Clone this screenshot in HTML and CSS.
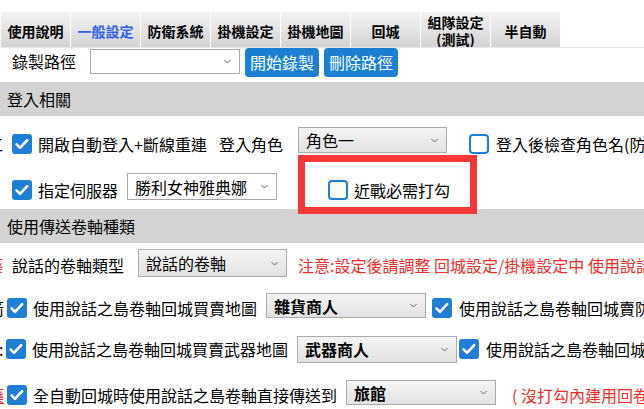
FILE: index.html
```html
<!DOCTYPE html>
<html lang="zh-Hant">
<head>
<meta charset="utf-8">
<title>一般設定</title>
<link rel="stylesheet" href="styles.css">
</head>
<body>
<div class="page">
  <nav class="tabs">
    <div class="tab">使用說明</div>
    <div class="tab active">一般設定</div>
    <div class="tab">防衛系統</div>
    <div class="tab">掛機設定</div>
    <div class="tab">掛機地圖</div>
    <div class="tab">回城</div>
    <div class="tab two">組隊設定<br>(測試)</div>
    <div class="tab">半自動</div>
  </nav>

  <div class="rec-row">
    <span class="rec-label">錄製路徑</span>
    <div class="select plain sel-path"><span></span><svg class="chev" width="7" height="5" viewBox="0 0 7 5"><path d="M0.5 1l3 3 3-3" fill="none" stroke="#666" stroke-width="1"/></svg></div>
    <button class="btn">開始錄製</button>
    <button class="btn">刪除路徑</button>
  </div>

  <div class="section-header">登入相關</div>

  <div class="row r1">
    <span class="cut cut-a">工</span>
    <svg class="cb cb-r1" width="20" height="20" viewBox="0 0 20 20"><rect width="20" height="20" rx="3" fill="#1f7ed6"/><path d="M4.6 10.4l3.4 3.4 7.2-7.6" fill="none" stroke="#fff" stroke-width="2.6" stroke-linecap="round" stroke-linejoin="round"/></svg>
    <span class="lbl w-r1">開啟自動登入+斷線重連<span class="sp12"></span>登入角色</span>
    <div class="select sel-role"><span>角色一</span><svg class="chev" width="7" height="5" viewBox="0 0 7 5"><path d="M0.5 1l3 3 3-3" fill="none" stroke="#666" stroke-width="1"/></svg></div>
    <svg class="cb cb-check-name" width="20" height="20" viewBox="0 0 20 20"><rect x="1" y="1" width="18" height="18" rx="3" fill="#fff" stroke="#1f7ed6" stroke-width="2"/></svg>
    <span class="lbl ml7">登入後檢查角色名(防止登錯角色)</span>
  </div>

  <div class="row r2">
    <svg class="cb" width="20" height="20" viewBox="0 0 20 20"><rect width="20" height="20" rx="3" fill="#1f7ed6"/><path d="M4.6 10.4l3.4 3.4 7.2-7.6" fill="none" stroke="#fff" stroke-width="2.6" stroke-linecap="round" stroke-linejoin="round"/></svg>
    <span class="lbl w-r2">指定伺服器</span>
    <div class="select plain sel-server"><span>勝利女神雅典娜</span><svg class="chev" width="7" height="5" viewBox="0 0 7 5"><path d="M0.5 1l3 3 3-3" fill="none" stroke="#666" stroke-width="1"/></svg></div>
    <svg class="cb cb-melee" width="20" height="20" viewBox="0 0 20 20"><rect x="1" y="1" width="18" height="18" rx="3" fill="#fff" stroke="#1f7ed6" stroke-width="2"/></svg>
    <span class="lbl ml6">近戰必需打勾</span>
  </div>

  <div class="section-header">使用傳送卷軸種類</div>

  <div class="row r3">
    <span class="cut cut-a red">藥</span>
    <span class="lbl w-r3">說話的卷軸類型</span>
    <div class="select sel-scroll"><span>說話的卷軸</span><svg class="chev" width="7" height="5" viewBox="0 0 7 5"><path d="M0.5 1l3 3 3-3" fill="none" stroke="#666" stroke-width="1"/></svg></div>
    <span class="lbl red note">注意:設定後請調整 回城設定/掛機設定中 使用說話之島卷軸回城</span>
  </div>

  <div class="row r4">
    <span class="cut cut-b">箭</span>
    <svg class="cb ml3" width="20" height="20" viewBox="0 0 20 20"><rect width="20" height="20" rx="3" fill="#1f7ed6"/><path d="M4.6 10.4l3.4 3.4 7.2-7.6" fill="none" stroke="#fff" stroke-width="2.6" stroke-linecap="round" stroke-linejoin="round"/></svg>
    <span class="lbl w-r4">使用說話之島卷軸回城買賣地圖</span>
    <div class="select sel-shop"><b>雜貨商人</b><svg class="chev" width="7" height="5" viewBox="0 0 7 5"><path d="M0.5 1l3 3 3-3" fill="none" stroke="#666" stroke-width="1"/></svg></div>
    <svg class="cb ml6" width="20" height="20" viewBox="0 0 20 20"><rect width="20" height="20" rx="3" fill="#1f7ed6"/><path d="M4.6 10.4l3.4 3.4 7.2-7.6" fill="none" stroke="#fff" stroke-width="2.6" stroke-linecap="round" stroke-linejoin="round"/></svg>
    <span class="lbl ml7">使用說話之島卷軸回城賣防具</span>
  </div>

  <div class="row r5">
    <span class="cut cut-colon">:</span>
    <svg class="cb ml2" width="20" height="20" viewBox="0 0 20 20"><rect width="20" height="20" rx="3" fill="#1f7ed6"/><path d="M4.6 10.4l3.4 3.4 7.2-7.6" fill="none" stroke="#fff" stroke-width="2.6" stroke-linecap="round" stroke-linejoin="round"/></svg>
    <span class="lbl w-r5">使用說話之島卷軸回城買賣武器地圖</span>
    <div class="select sel-weapon"><b>武器商人</b><svg class="chev" width="7" height="5" viewBox="0 0 7 5"><path d="M0.5 1l3 3 3-3" fill="none" stroke="#666" stroke-width="1"/></svg></div>
    <svg class="cb ml2" width="20" height="20" viewBox="0 0 20 20"><rect width="20" height="20" rx="3" fill="#1f7ed6"/><path d="M4.6 10.4l3.4 3.4 7.2-7.6" fill="none" stroke="#fff" stroke-width="2.6" stroke-linecap="round" stroke-linejoin="round"/></svg>
    <span class="lbl ml7">使用說話之島卷軸回城賣武器</span>
  </div>

  <div class="row r6">
    <span class="cut cut-b red under">藥</span>
    <svg class="cb ml3" width="20" height="20" viewBox="0 0 20 20"><rect width="20" height="20" rx="3" fill="#1f7ed6"/><path d="M4.6 10.4l3.4 3.4 7.2-7.6" fill="none" stroke="#fff" stroke-width="2.6" stroke-linecap="round" stroke-linejoin="round"/></svg>
    <span class="lbl w-r6">全自動回城時使用說話之島卷軸直接傳送到</span>
    <div class="select sel-inn"><b>旅館</b><svg class="chev" width="7" height="5" viewBox="0 0 7 5"><path d="M0.5 1l3 3 3-3" fill="none" stroke="#666" stroke-width="1"/></svg></div>
    <span class="lbl red note2">( 沒打勾內建用回卷軸)</span>
  </div>

  <div class="annot"></div>
</div>
</body>
</html>
```

FILE: styles.css
```css
* { box-sizing: border-box; }
html, body { margin: 0; padding: 0; }
body {
  width: 644px;
  height: 409px;
  overflow: hidden;
  background: #fff;
  font-family: "Noto Sans CJK TC", "Noto Sans", sans-serif;
  font-size: 16px;
  color: #000;
}
.page {
  position: relative;
  width: 644px;
  height: 409px;
  overflow: hidden;
}

/* tabs */
.tabs {
  display: flex;
  gap: 1px;
  padding-left: 1px;
  margin-top: 12px;
  height: 36px;
  border-bottom: 1px solid #e6e6e6;
}
.tab {
  width: 69px;
  height: 35px;
  flex-shrink: 0;
  background: linear-gradient(#f4f4f4, #d3d3d3);
  display: flex;
  align-items: center;
  justify-content: center;
  text-align: center;
  font-size: 14px;
  font-weight: 700;
  line-height: 17px;
  padding-top: 3px;
  overflow: hidden;
}
.tab.active { color: #2f5cf0; }

/* record row */
.rec-row {
  display: flex;
  align-items: flex-start;
  height: 34px;
  padding-left: 12px;
}
.rec-label {
  width: 78px;
  flex-shrink: 0;
  line-height: 24px;
  margin-top: 1px;
}
.btn {
  width: 74px;
  height: 29px;
  margin-left: 5px;
  padding: 0;
  border: 0;
  border-radius: 4px;
  background: #1b7fd4;
  color: #fff;
  font-family: inherit;
  font-size: 16px;
  line-height: 29px;
  flex-shrink: 0;
}

/* section headers */
.section-header {
  height: 34px;
  background: #d3d3d3;
  padding-left: 7px;
  line-height: 34px;
}

/* rows */
.row {
  display: flex;
  align-items: center;
  white-space: nowrap;
}
.r1 { height: 55px; }
.r2 { height: 38px; padding-left: 12px; }
.r3 { height: 44px; }
.r4 { height: 42px; }
.r5 { height: 40px; }
.r6 { height: 52px; }

.lbl { line-height: 20px; flex-shrink: 0; }
.red { color: #f42c2c; }
.under { text-decoration: underline; }

.cut {
  width: 16px;
  flex-shrink: 0;
  line-height: 20px;
}
.cut-a { margin-left: -13px; }
.cut-b { margin-left: -12px; }
.cut-colon { width: 5px; margin-left: -1px; }

.cb { flex-shrink: 0; display: block; }
.cb-r1 { margin-left: 9px; }
.cb-check-name { margin-left: 22px; }
.cb-melee { margin-left: 51px; }
.ml2 { margin-left: 2px; }
.ml3 { margin-left: 3px; }
.ml6 { margin-left: 6px; }
.ml7 { margin-left: 7px; }

.w-r1 { width: 260px; margin-left: 6px; }
.sp12 { display: inline-block; width: 12px; }
.w-r2 { width: 89px; margin-left: 6px; }
.w-r3 { width: 126px; margin-left: 9px; }
.w-r4 { width: 233px; margin-left: 6px; }
.w-r5 { width: 265px; margin-left: 6px; }
.w-r6 { width: 313px; margin-left: 6px; }
.note { margin-left: 11px; }
.note2 { margin-left: 16px; }

/* selects */
.select {
  display: flex;
  align-items: center;
  justify-content: space-between;
  flex-shrink: 0;
  border: 1px solid #aaaaaa;
  background: linear-gradient(#f4f4f4, #e2e2e2);
  padding: 0 8px 0 7px;
  line-height: 20px;
}
.select.plain { background: #fff; }
.select b { font-weight: 700; }
.chev { display: block; flex-shrink: 0; }

.sel-path { width: 150px; height: 25px; margin-top: 1px; }
.sel-role { width: 149px; height: 26px; align-self: flex-start; margin-top: 11px; }
.sel-server { width: 150px; height: 27px; align-self: flex-start; margin-top: 2px; }
.sel-scroll { width: 149px; height: 28px; align-self: flex-start; margin-top: 6px; }
.sel-shop { width: 160px; height: 25px; align-self: flex-start; margin-top: 6px; }
.sel-weapon { width: 160px; height: 27px; }
.sel-inn { width: 150px; height: 25px; align-self: flex-start; margin-top: 11px; }

/* red annotation box drawn over the form */
.annot {
  position: absolute;
  left: 298px;
  top: 155px;
  width: 179px;
  height: 59px;
  border: 7px solid #f43838;
  pointer-events: none;
}
```
